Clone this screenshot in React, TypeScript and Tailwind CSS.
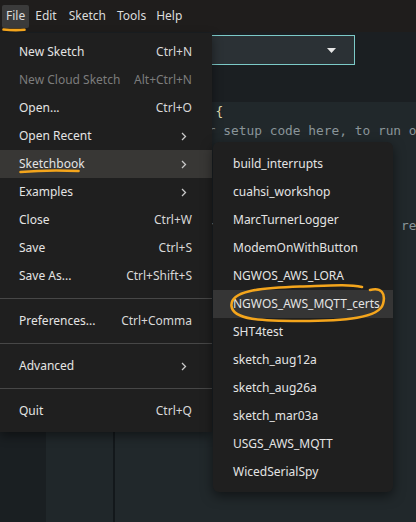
import React from "react";

const UI = { fontFamily: '"Noto Sans", "Open Sans", sans-serif' };
const MONO = { fontFamily: '"DejaVu Sans Mono", "Liberation Mono", monospace' };

function Chevron() {
  return (
    <svg width="6" height="9" viewBox="0 0 6 9" className="block">
      <path d="M1 1 L4.5 4.5 L1 8" fill="none" stroke="#c8c8c8" strokeWidth="1.3" />
    </svg>
  );
}

type Item =
  | { kind: "item"; label: string; shortcut?: string; sub?: boolean; disabled?: boolean; active?: boolean }
  | { kind: "sep" };

const fileItems: Item[] = [
  { kind: "item", label: "New Sketch", shortcut: "Ctrl+N" },
  { kind: "item", label: "New Cloud Sketch", shortcut: "Alt+Ctrl+N", disabled: true },
  { kind: "item", label: "Open...", shortcut: "Ctrl+O" },
  { kind: "item", label: "Open Recent", sub: true },
  { kind: "item", label: "Sketchbook", sub: true, active: true },
  { kind: "item", label: "Examples", sub: true },
  { kind: "item", label: "Close", shortcut: "Ctrl+W" },
  { kind: "item", label: "Save", shortcut: "Ctrl+S" },
  { kind: "item", label: "Save As...", shortcut: "Ctrl+Shift+S" },
  { kind: "sep" },
  { kind: "item", label: "Preferences...", shortcut: "Ctrl+Comma" },
  { kind: "sep" },
  { kind: "item", label: "Advanced", sub: true },
  { kind: "sep" },
  { kind: "item", label: "Quit", shortcut: "Ctrl+Q" },
];

const sketches = [
  "build_interrupts",
  "cuahsi_workshop",
  "MarcTurnerLogger",
  "ModemOnWithButton",
  "NGWOS_AWS_LORA",
  "NGWOS_AWS_MQTT_certs",
  "SHT4test",
  "sketch_aug12a",
  "sketch_aug26a",
  "sketch_mar03a",
  "USGS_AWS_MQTT",
  "WicedSerialSpy",
];

const code = [
  { t: "void setup() {", brace: true },
  { t: "  // put your setup code here, to run once:" },
  { t: "" },
  { t: "}" },
  { t: "" },
  { t: "void loop()" },
  { t: "  // put your main code here, to run repeatedly:" },
  { t: "" },
  { t: "}" },
];

export default function App() {
  return (
    <div className="relative w-[416px] h-[522px] overflow-hidden bg-[#21282b]" style={UI}>
      {/* background app */}
      <div className="flex flex-col h-full">
        <div className="h-[32px] shrink-0 bg-[#1f1d1c] flex items-center pl-[2px] text-[12px] text-[#dcdcdc]">
          <div className="px-[4px] h-[23px] flex items-center rounded-[2px] bg-[#3b3b3b]">File</div>
          <div className="px-[6px]">Edit</div>
          <div className="px-[6px]">Sketch</div>
          <div className="px-[5px]">Tools</div>
          <div className="px-[5px]">Help</div>
        </div>
        <div className="h-[70px] shrink-0 bg-[#1b1f22] pt-[3px] pl-[120px]">
          <div className="w-[235px] h-[30px] border border-[#7ccac8] bg-[#2b3135] flex items-center justify-end pr-[18px]">
            <svg width="9" height="5" viewBox="0 0 9 5">
              <path d="M0 0 L9 0 L4.5 5 Z" fill="#e6e6e6" />
            </svg>
          </div>
        </div>
        <div className="flex flex-1 min-h-0">
          <div className="w-[46px] shrink-0 bg-[#1a1f22]" />
          <div className="w-[67px] shrink-0 bg-[#20272a]" />
          <div className="w-[2px] shrink-0 bg-[#13181b]" />
          <div
            className="flex-1 min-w-0 overflow-hidden bg-[#21282b] text-[12.85px] leading-[19px] text-[#8a9599]"
            style={MONO}
          >
            {code.map((l, i) => (
              <div key={i} className="h-[19px] whitespace-pre">
                {l.brace ? (
                  <>
                    <span>void setup() </span>
                    <span className="text-[#e2dfb0]">{"{"}</span>
                  </>
                ) : (
                  l.t
                )}
              </div>
            ))}
          </div>
        </div>
      </div>

      {/* File menu */}
      <div className="absolute left-0 top-[33px] w-[212px] bg-[#1f1f1f] pt-[5px] pb-[7px] shadow-[0_4px_10px_rgba(0,0,0,0.45)] text-[12px]">
        {fileItems.map((it, i) =>
          it.kind === "sep" ? (
            <div key={i} className="h-[17px] flex items-center">
              <div className="h-px w-full bg-[#474747]" />
            </div>
          ) : (
            <div
              key={i}
              className={`h-[28px] flex items-center justify-between pl-[19px] pr-[20px] ${
                it.active ? "bg-[#383735]" : ""
              } ${it.disabled ? "text-[#7c7c7c]" : "text-[#e4e4e4]"}`}
            >
              <span>{it.label}</span>
              {it.sub ? (
                <span className="pr-[5px]">
                  <Chevron />
                </span>
              ) : (
                <span className={it.disabled ? "text-[#7c7c7c]" : "text-[#d8d8d8]"}>{it.shortcut}</span>
              )}
            </div>
          )
        )}
      </div>

      {/* Sketchbook submenu */}
      <div className="absolute left-[213px] top-[142px] w-[180px] rounded-[6px] bg-[#1f1f1f] pt-[8px] pb-[6px] shadow-[0_4px_12px_rgba(0,0,0,0.5)] text-[12px] text-[#e4e4e4]">
        {sketches.map((s) => (
          <div
            key={s}
            className={`h-[28px] flex items-center pl-[20px] ${s === "NGWOS_AWS_MQTT_certs" ? "bg-[#353535]" : ""}`}
          >
            {s}
          </div>
        ))}
      </div>

      {/* annotations */}
      <svg className="absolute left-0 top-0 pointer-events-none" width="416" height="522" viewBox="0 0 416 522">
        <g fill="none" stroke="#f4a51c" strokeWidth="2.6" strokeLinecap="round" strokeLinejoin="round">
          <path d="M3.5 29.5 Q 14 30.5 24.5 29.8" />
          <path d="M20.5 172 Q 48 169.5 78.5 171" />
          <path d="M370 290 C 381 287 386 293 383 304 C 379 318 345 321 300 321 C 262 321 233 320 231.5 306 C 230 291 258 288 300 286.5 C 330 285.5 348 284 362 287" />
        </g>
      </svg>
    </div>
  );
}
